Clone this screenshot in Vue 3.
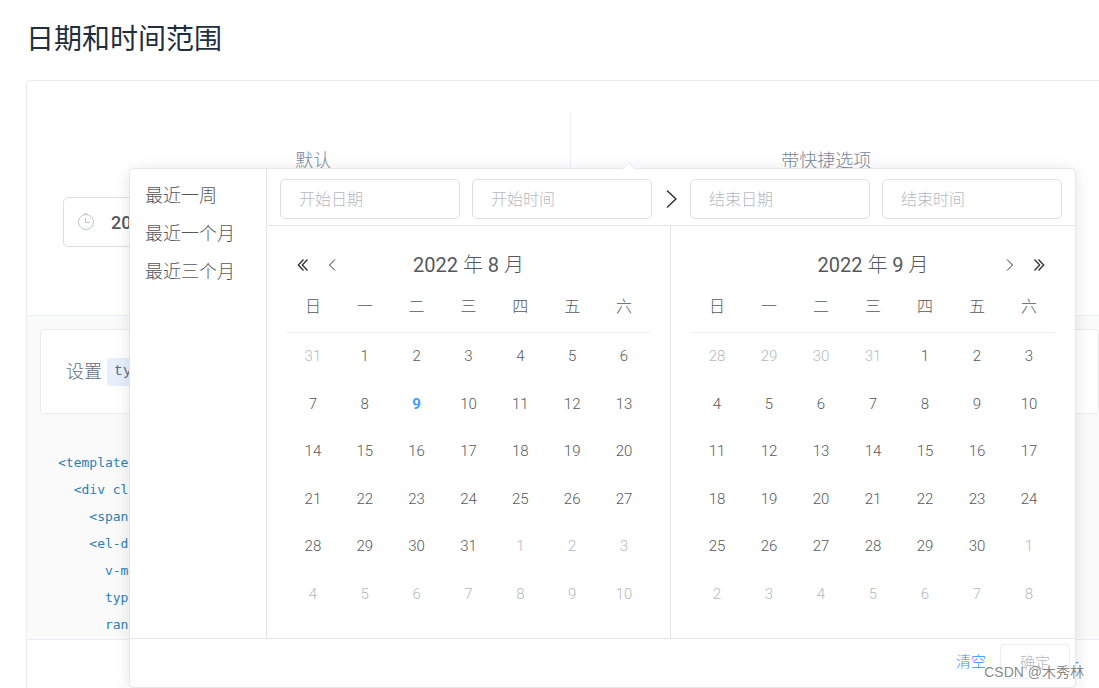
<script setup>
const shortcuts = ['最近一周', '最近一个月', '最近三个月']
const weekdays = ['日', '一', '二', '三', '四', '五', '六']

function buildWeeks(previous, length) {
  const cells = previous.map((day) => ({ day, muted: true }))
  for (let day = 1; day <= length; day++) cells.push({ day, muted: false })
  for (let day = 1; cells.length < 42; day++) cells.push({ day, muted: true })
  return Array.from({ length: 6 }, (_, i) => cells.slice(i * 7, i * 7 + 7))
}

const months = [
  { month: 8, today: 9, weeks: buildWeeks([31], 31) },
  { month: 9, today: 0, weeks: buildWeeks([28, 29, 30, 31], 30) },
]

const code = `<template
  <div cl
    <span
    <el-d
      v-m
      typ
      ran`
</script>

<template>
  <main class="page">
    <h2 class="title">日期和时间范围</h2>

    <section class="demo">
      <div class="source">
        <div class="block">
          <span class="caption">默认</span>
          <div class="range">
            <svg class="clock" viewBox="0 0 18 18" aria-hidden="true">
              <circle cx="9" cy="9" r="7.5" />
              <path d="M8.5 5v4.5H13M7 1h4" />
            </svg>
            <span>20</span>
          </div>
        </div>
        <div class="block">
          <span class="caption">带快捷选项</span>
        </div>
      </div>
      <div class="meta">
        <div class="description">设置 <code>ty</code></div>
        <pre class="code">{{ code }}</pre>
      </div>
      <div class="control"><span>-</span></div>
    </section>

    <div class="picker">
      <span class="pointer"></span>
      <div class="body">
        <aside class="sidebar">
          <button v-for="item in shortcuts" :key="item" type="button">{{ item }}</button>
        </aside>
        <div class="content">
          <div class="fields">
            <div class="pair">
              <input type="text" placeholder="开始日期" aria-label="开始日期" />
              <input type="text" placeholder="开始时间" aria-label="开始时间" />
            </div>
            <svg class="between" viewBox="0 0 12 20" aria-hidden="true">
              <path d="M2 1.5 11 10 2 18.5" />
            </svg>
            <div class="pair">
              <input type="text" placeholder="结束日期" aria-label="结束日期" />
              <input type="text" placeholder="结束时间" aria-label="结束时间" />
            </div>
          </div>
          <div class="months">
            <section v-for="(m, index) in months" :key="m.month" class="month">
              <header class="head">
                <div class="nav">
                  <template v-if="index === 0">
                    <button type="button" aria-label="上一年">
                      <svg viewBox="0 0 12 12"><path d="M7.5.5 2.3 6l5.2 5.5M11.5.5 6.3 6l5.2 5.5" /></svg>
                    </button>
                    <button type="button" aria-label="上个月">
                      <svg class="thin" viewBox="0 0 12 12"><path d="M9 .5 3.5 6 9 11.5" /></svg>
                    </button>
                  </template>
                </div>
                <div class="name">
                  <b>2022</b> 年 <b>{{ m.month }}</b> 月
                </div>
                <div class="nav end">
                  <template v-if="index === 1">
                    <button type="button" aria-label="下个月">
                      <svg class="thin" viewBox="0 0 12 12"><path d="M3 .5 8.5 6 3 11.5" /></svg>
                    </button>
                    <button type="button" aria-label="下一年">
                      <svg viewBox="0 0 12 12"><path d="M.5.5 5.7 6l-5.2 5.5M4.5.5 9.7 6l-5.2 5.5" /></svg>
                    </button>
                  </template>
                </div>
              </header>
              <table>
                <thead>
                  <tr>
                    <th v-for="d in weekdays" :key="d" scope="col">{{ d }}</th>
                  </tr>
                </thead>
                <tbody>
                  <tr v-for="(week, w) in m.weeks" :key="w">
                    <td
                      v-for="(cell, c) in week"
                      :key="c"
                      :class="{ muted: cell.muted, today: !cell.muted && cell.day === m.today }"
                    >
                      {{ cell.day }}
                    </td>
                  </tr>
                </tbody>
              </table>
            </section>
          </div>
        </div>
      </div>
      <footer class="actions">
        <button type="button" class="clear">清空</button>
        <button type="button" class="confirm" disabled>确定</button>
      </footer>
    </div>

    <div class="watermark">CSDN @木秀林</div>
  </main>
</template>

<style>
body {
  margin: 0;
  background: #fff;
}
</style>

<style scoped>
.page {
  position: relative;
  box-sizing: border-box;
  height: 100vh;
  padding: 18px 0 0 26px;
  overflow: hidden;
  color: #56585c;
  font-family: "Liberation Sans", "Noto Sans CJK SC", sans-serif;
  font-weight: 300;
}
button,
input {
  font: inherit;
}
button {
  padding: 0;
  border: 0;
  background: none;
  color: inherit;
}
.title {
  margin: 0 0 18px;
  color: #1f2f3d;
  font-size: 28px;
  font-weight: 400;
  line-height: 44px;
}
.demo {
  margin-right: -14px;
  height: 100vh;
  border: 1px solid #ebebeb;
  border-radius: 4px;
}
.source {
  display: grid;
  grid-template-columns: 1fr 1fr;
  padding: 30px 30px 0;
  height: 204px;
  border-bottom: 1px solid #eaeefb;
}
.block {
  padding: 39px 6px 0;
  text-align: center;
}
.block + .block {
  border-left: 1px solid #eff2f6;
}
.caption {
  display: block;
  margin-bottom: 25px;
  color: #76879d;
  font-size: 18px;
  line-height: 22px;
}
.range {
  display: flex;
  align-items: center;
  box-sizing: border-box;
  height: 50px;
  padding: 0 13px;
  gap: 16px;
  border: 1px solid #dcdfe6;
  border-radius: 5px;
  font-family: Roboto, sans-serif;
  font-size: 18px;
  font-weight: 500;
}
.clock {
  width: 18px;
  height: 18px;
  fill: none;
  stroke: #c0c4cc;
}
.meta {
  padding: 13px;
  height: 297px;
  border-bottom: 1px solid #eaeefb;
  background: #fafafa;
}
.description {
  display: flex;
  align-items: center;
  gap: 5px;
  padding: 27px 25px 26px;
  border: 1px solid #ebebeb;
  border-radius: 4px;
  background: #fff;
  color: #5e6d82;
  font-size: 18px;
  line-height: 30px;
}
.description code {
  padding: 0 7px;
  border-radius: 4px;
  background: #e6effb;
  font-family: "Liberation Mono", monospace;
  font-size: 15px;
  line-height: 28px;
}
.code {
  margin: 35px 18px 0;
  color: #2a7fb8;
  font-family: "DejaVu Sans Mono", monospace;
  font-size: 13px;
  font-weight: 400;
  line-height: 27px;
}
.control {
  padding: 0 33px;
  color: #409eff;
  font-size: 18px;
  line-height: 44px;
  text-align: right;
}
.picker {
  position: absolute;
  top: 168px;
  right: 23px;
  left: 129px;
  border: 1px solid #e4e7ed;
  border-radius: 5px;
  background: #fff;
  box-shadow: 0 2px 15px rgba(0, 0, 0, 0.1);
}
.pointer {
  position: absolute;
  top: -5px;
  left: 494px;
  width: 9px;
  height: 9px;
  border: 1px solid #ebeef5;
  border-right: 0;
  border-bottom: 0;
  background: #fff;
  transform: rotate(45deg);
}
.body {
  display: flex;
}
.sidebar {
  display: flex;
  flex-direction: column;
  box-sizing: border-box;
  width: 137px;
  padding-top: 8px;
  border-right: 1px solid #e4e4e4;
}
.sidebar button {
  padding-left: 15px;
  font-size: 18px;
  line-height: 38px;
  text-align: left;
}
.content {
  position: relative;
  flex: 1;
  min-width: 0;
}
.fields {
  display: flex;
  padding: 10px 13px 6px;
  border-bottom: 1px solid #e4e4e4;
}
.pair {
  display: flex;
  flex: 1;
  gap: 12px;
  min-width: 0;
}
.pair input {
  box-sizing: border-box;
  flex: 1;
  min-width: 0;
  height: 40px;
  padding: 2px 18px 0;
  border: 1px solid #dcdfe6;
  border-radius: 5px;
  font-size: 16px;
}
.pair input::placeholder {
  color: #b4b8c1;
}
.between {
  flex: none;
  width: 12px;
  height: 20px;
  margin: 10px 13px;
  fill: none;
  stroke: #303133;
  stroke-width: 1.5;
}
.months {
  display: grid;
  grid-template-columns: 1fr 1fr;
}
.month {
  padding: 20px;
}
.month:first-child {
  border-right: 1px solid #e4e4e4;
}
.head {
  display: flex;
  align-items: center;
  height: 38px;
}
.nav {
  display: flex;
  flex: 1;
  gap: 18px;
  padding: 0 9px;
}
.nav.end {
  justify-content: flex-end;
}
.nav svg {
  display: block;
  width: 12px;
  height: 12px;
  fill: none;
  stroke: #303133;
  stroke-width: 1.3;
}
.nav .thin {
  stroke-width: 1;
}
.name {
  font-family: Roboto, "Noto Sans CJK SC", sans-serif;
  font-size: 20px;
  line-height: 28px;
}
.name b {
  font-weight: 400;
}
table {
  width: 100%;
  border-collapse: collapse;
  table-layout: fixed;
  font-family: Roboto, "Noto Sans CJK SC", sans-serif;
  font-size: 15px;
  line-height: 20px;
  text-align: center;
}
th {
  height: 46px;
  padding: 0 0 2px;
  border-bottom: 1px solid #ebeef5;
  font-size: 16px;
  font-weight: 300;
}
td {
  height: 46px;
  padding: 0 0 2px;
}
tr:nth-child(even) td {
  height: 45px;
}
.muted {
  color: #b4b8c1;
}
.today {
  color: #409eff;
  font-weight: 700;
}
.actions {
  display: flex;
  justify-content: flex-end;
  gap: 14px;
  padding: 5px;
  border-top: 1px solid #e4e4e4;
  font-size: 15px;
}
.clear {
  padding-bottom: 5px;
  color: #2b90fb;
}
.confirm {
  box-sizing: border-box;
  width: 70px;
  height: 35px;
  margin-bottom: 3px;
  border: 1px solid #ebeef5;
  border-radius: 4px;
  color: #b4b8c1;
}
.watermark {
  position: absolute;
  right: 15px;
  bottom: 6px;
  color: rgba(80, 80, 80, 0.7);
  font-size: 14px;
  font-weight: 400;
  line-height: 20px;
  text-shadow: 0 0 2px #fff;
}
</style>
